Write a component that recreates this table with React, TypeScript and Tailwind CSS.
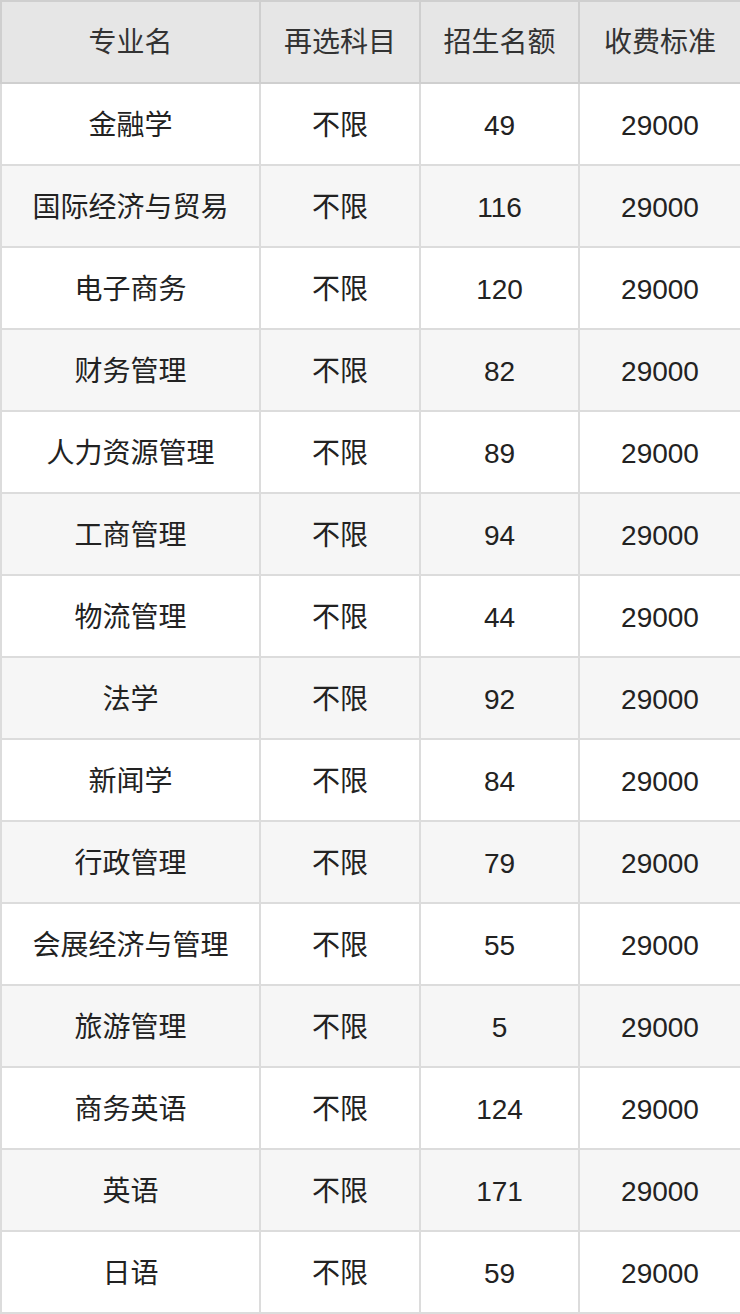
const rows: [string, string][] = [
  ['金融学', '49'],
  ['国际经济与贸易', '116'],
  ['电子商务', '120'],
  ['财务管理', '82'],
  ['人力资源管理', '89'],
  ['工商管理', '94'],
  ['物流管理', '44'],
  ['法学', '92'],
  ['新闻学', '84'],
  ['行政管理', '79'],
  ['会展经济与管理', '55'],
  ['旅游管理', '5'],
  ['商务英语', '124'],
  ['英语', '171'],
  ['日语', '59'],
];

const headers = ['专业名', '再选科目', '招生名额', '收费标准'];
const widths = ['w-[259px]', 'w-[160px]', 'w-[159px]', 'w-[162px]'];

export default function App() {
  return (
    <div className="w-[740px] bg-white">
      <table
        className="w-[740px] table-fixed border-collapse text-[28px] text-[#222]"
        style={{ fontFamily: '"Liberation Sans", "Noto Sans CJK SC", sans-serif' }}
      >
        <thead>
          <tr className="h-[82px]">
            {headers.map((h, i) => (
              <th
                key={h}
                className={`${widths[i]} border-2 border-[#cfcfcf] bg-[#e6e6e6] p-0 pt-[2px] text-center align-middle font-normal text-[#333]`}
              >
                {h}
              </th>
            ))}
          </tr>
        </thead>
        <tbody>
          {rows.map(([name, count], i) => (
            <tr key={name} className={`h-[82px] ${i % 2 === 1 ? 'bg-[#f6f6f6]' : 'bg-white'}`}>
              <td className="border-2 border-[#dcdcdc] p-0 pt-[3px] text-center align-middle">{name}</td>
              <td className="border-2 border-[#dcdcdc] p-0 pt-[3px] text-center align-middle">不限</td>
              <td className="border-2 border-[#dcdcdc] p-0 pt-[3px] text-center align-middle">{count}</td>
              <td className="border-2 border-[#dcdcdc] p-0 pt-[3px] text-center align-middle">29000</td>
            </tr>
          ))}
        </tbody>
      </table>
    </div>
  );
}
